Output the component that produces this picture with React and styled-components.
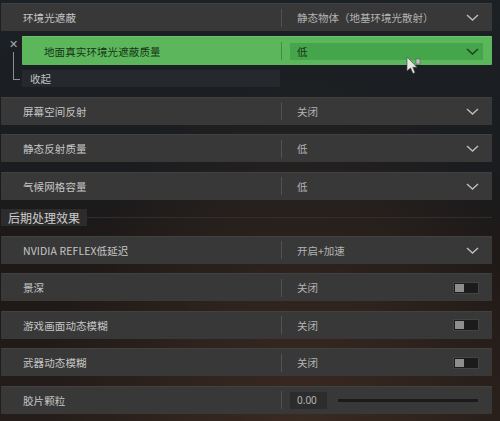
import * as React from "react"
import styled, { createGlobalStyle } from "styled-components"

const GlobalStyle = createGlobalStyle`
  html, body {
    margin: 0;
    padding: 0;
  }
  body {
    width: 500px;
    height: 421px;
    overflow: hidden;
    font-family: "Noto Sans CJK SC", "Noto Sans", sans-serif;
    background:
      radial-gradient(ellipse at 60% 105%, #3a2a22 0%, rgba(40, 30, 26, 0) 60%),
      linear-gradient(180deg, #1c2125 0%, #1a1c1f 40%, #1d1816 60%, #251d19 100%);
  }
`

const Page = styled.div`
  position: relative;
  width: 500px;
  height: 421px;
  padding: 3px 8px 0 1px;
  box-sizing: border-box;
`

const List = styled.div`
  display: flex;
  flex-direction: column;
  gap: 9.5px;
`

const Group = styled.div`
  display: flex;
  flex-direction: column;
  gap: 5px;
`

const SubGroup = styled.div`
  display: flex;
`

const Gutter = styled.div`
  position: relative;
  width: 21px;
  flex-shrink: 0;
`

const CloseMark = styled.span`
  position: absolute;
  left: 8px;
  top: 2px;
  font-size: 11px;
  line-height: 11px;
  color: #a8a8a8;
`

const Bracket = styled.div`
  position: absolute;
  left: 12px;
  top: 16px;
  width: 6px;
  height: 27px;
  border-left: 1px solid #8e8e8e;
  border-bottom: 1px solid #8e8e8e;
`

const SubColumn = styled.div`
  flex: 1;
  display: flex;
  flex-direction: column;
  gap: 5px;
`

const Row = styled.div`
  display: flex;
  align-items: center;
  height: ${(p) => (p.$active ? 29 : 28)}px;
  background: ${(p) => (p.$active ? "#5cb75c" : "#383838")};
  border-top: 1px solid ${(p) => (p.$active ? "#6cc56c" : "#414141")};
  box-sizing: border-box;
  border-radius: 1px;
`

const Label = styled.div`
  width: ${(p) => p.$width}px;
  flex-shrink: 0;
  box-sizing: border-box;
  padding-left: 22px;
  font-size: 10.5px;
  color: ${(p) => (p.$active ? "#173517" : "#c6c6c6")};
  white-space: nowrap;
  letter-spacing: 0.1px;
`

const Divider = styled.div`
  width: 1px;
  height: 18px;
  background: ${(p) => (p.$active ? "#3f8f42" : "#525252")};
  flex-shrink: 0;
`

const Value = styled.div`
  flex: 1;
  display: flex;
  align-items: center;
  justify-content: space-between;
  padding: 0 13px 0 15px;
  font-size: 10.5px;
  color: #b3b3b3;
  white-space: nowrap;
`

const ActiveSelect = styled.div`
  flex: 1;
  display: flex;
  align-items: center;
  justify-content: space-between;
  height: 17px;
  margin: 0 9px 0 8px;
  padding: 0 4px 0 7px;
  background: #45a54a;
  font-size: 10.5px;
  color: #163316;
`

const CollapseRow = styled.div`
  width: 258px;
  height: 17px;
  display: flex;
  align-items: center;
  padding-left: 8px;
  box-sizing: border-box;
  background: #25292d;
  font-size: 10.5px;
  color: #c2c2c2;
`

const SectionHeader = styled.div`
  display: flex;
  align-items: center;
  height: 17px;
`

const SectionTitle = styled.div`
  height: 17px;
  display: flex;
  align-items: center;
  padding: 0 7px;
  background: rgba(48, 48, 48, 0.85);
  font-size: 12px;
  color: #cdcdcd;
  white-space: nowrap;
`

const SectionLine = styled.div`
  flex: 1;
  height: 1px;
  background: #2f2f2f;
`

const Toggle = styled.div`
  width: 26px;
  height: 12px;
  box-sizing: border-box;
  border: 1px solid #444;
  background: #1b1b1b;
  padding: 1px;
  display: flex;
`

const Knob = styled.div`
  width: 9px;
  height: 100%;
  background: #8d8d8d;
`

const SliderWrap = styled.div`
  flex: 1;
  display: flex;
  align-items: center;
  gap: 11px;
  margin: 0 14px 0 8px;
`

const NumberBox = styled.div`
  width: 37px;
  height: 17px;
  display: flex;
  align-items: center;
  padding-left: 7px;
  box-sizing: border-box;
  background: #2c2c2c;
  font-family: "Noto Sans", sans-serif;
  font-size: 10px;
  color: #b3b3b3;
`

const Track = styled.div`
  flex: 1;
  height: 3px;
  background: #1b1b1b;
`

const Cursor = styled.svg`
  position: absolute;
  left: 406px;
  top: 56px;
`

const Chevron = ({ color = "#bdbdbd" }) => (
  <svg width="13" height="7" viewBox="0 0 13 7">
    <path d="M1 1 L6.5 6 L12 1" fill="none" stroke={color} strokeWidth="1.4" />
  </svg>
)

const SelectRow = ({ label, value }) => (
  <Row>
    <Label $width={280}>{label}</Label>
    <Divider />
    <Value>
      <span>{value}</span>
      <Chevron />
    </Value>
  </Row>
)

const ToggleRow = ({ label, value }) => (
  <Row>
    <Label $width={280}>{label}</Label>
    <Divider />
    <Value>
      <span>{value}</span>
      <Toggle>
        <Knob />
      </Toggle>
    </Value>
  </Row>
)

const SliderRow = ({ label, value }) => (
  <Row>
    <Label $width={280}>{label}</Label>
    <Divider />
    <SliderWrap>
      <NumberBox>{value}</NumberBox>
      <Track />
    </SliderWrap>
  </Row>
)

export default function App() {
  return (
    <>
      <GlobalStyle />
      <Page>
        <List>
          <Group>
            <SelectRow label="环境光遮蔽" value="静态物体（地基环境光散射）" />
            <SubGroup>
              <Gutter>
                <CloseMark>✕</CloseMark>
                <Bracket />
              </Gutter>
              <SubColumn>
                <Row $active>
                  <Label $width={259} $active>
                    地面真实环境光遮蔽质量
                  </Label>
                  <Divider $active />
                  <ActiveSelect>
                    <span>低</span>
                    <Chevron color="#1d3d1d" />
                  </ActiveSelect>
                </Row>
                <CollapseRow>收起</CollapseRow>
              </SubColumn>
            </SubGroup>
          </Group>
          <SelectRow label="屏幕空间反射" value="关闭" />
          <SelectRow label="静态反射质量" value="低" />
          <SelectRow label="气候网格容量" value="低" />
          <SectionHeader>
            <SectionTitle>后期处理效果</SectionTitle>
            <SectionLine />
          </SectionHeader>
          <SelectRow label="NVIDIA REFLEX低延迟" value="开启+加速" />
          <ToggleRow label="景深" value="关闭" />
          <ToggleRow label="游戏画面动态模糊" value="关闭" />
          <ToggleRow label="武器动态模糊" value="关闭" />
          <SliderRow label="胶片颗粒" value="0.00" />
        </List>
        <Cursor width="16" height="20" viewBox="0 0 16 20">
          <path d="M1 1 L1 15 L4.5 12 L7 17.5 L9 16.5 L6.8 11.3 L11 11.3 Z" fill="#e6e6e6" stroke="#444" strokeWidth="0.6" />
          <rect x="10" y="3" width="4" height="5" fill="#bdbdbd" stroke="#555" strokeWidth="0.5" />
        </Cursor>
      </Page>
    </>
  )
}
